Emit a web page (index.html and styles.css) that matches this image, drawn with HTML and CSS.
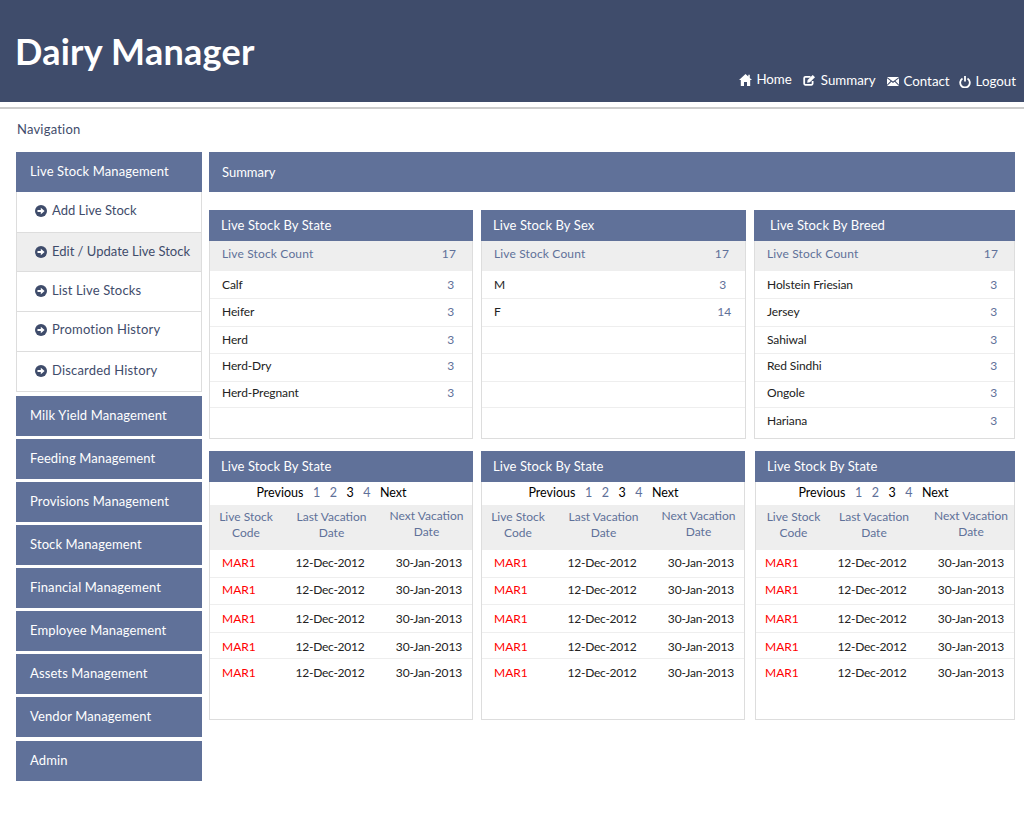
FILE: index.html
```html
<!DOCTYPE html>
<html>
<head>
  <meta charset="UTF-8">
  <title>Dairy Manager</title>
  <link rel="stylesheet" href="styles.css">
</head>
<body>
  <svg class="defs" width="0" height="0">
    <symbol id="i-arrow" viewBox="0 0 12 12">
      <circle cx="6" cy="6" r="6" fill="#3f4c6b"/>
      <path d="M2.500 4.900h3.300V2.800l3.800 3.200-3.800 3.200V7.100H2.500z" fill="#fff"/>
    </symbol>
  </svg>

  <div class="header">
    <div class="logo">Dairy Manager</div>
    <div class="topnav">
      <a class="topnav-item home">
        <svg width="13" height="12" viewBox="0 0 13 12"><path d="M6.500 0 0 5.900h1.800V12h3.200V8h3v4h3.200V5.900H13l-2.200-2V.8H9.300v1.700z" fill="#fff"/></svg>
        Home
      </a>
      <a class="topnav-item summary">
        <svg width="13" height="11" viewBox="0 0 13 11"><path d="M7.500 1.900H2.400a1.200 1.200 0 0 0-1.200 1.200v5.500a1.200 1.200 0 0 0 1.200 1.200h6a1.200 1.200 0 0 0 1.200-1.200V6" fill="none" stroke="#fff" stroke-width="1.800"/><path d="M4.600 5 9.700 0 12 2.200 6.900 7.200l-2.700.5z" fill="#fff"/></svg>
        Summary
      </a>
      <a class="topnav-item contact">
        <svg width="12" height="9" viewBox="0 0 12 9"><path d="M0 0h12L6 4.600z M0 1.200V7.800L3.600 4z M12 1.200V7.800L8.400 4z M0 9h12L7.600 4.800 6 6 4.400 4.800z" fill="#fff"/></svg>
        Contact
      </a>
      <a class="topnav-item logout">
        <svg width="12" height="12" viewBox="0 0 12 12"><path d="M3.500 2.600a4.800 4.800 0 1 0 5 0" fill="none" stroke="#fff" stroke-width="1.800"/><path d="M6 0v5.500" stroke="#fff" stroke-width="1.800"/></svg>
        Logout
      </a>
    </div>
  </div>
  <div class="header-rule"></div>

  <div class="nav-title">Navigation</div>

  <div class="layout">
    <div class="sidebar">
      <div class="side-head">Live Stock Management</div>
      <ul class="side-sub">
        <li><svg width="12" height="12"><use href="#i-arrow"/></svg>Add Live Stock</li>
        <li class="active"><svg width="12" height="12"><use href="#i-arrow"/></svg>Edit / Update Live Stock</li>
        <li><svg width="12" height="12"><use href="#i-arrow"/></svg>List Live Stocks</li>
        <li><svg width="12" height="12"><use href="#i-arrow"/></svg>Promotion History</li>
        <li><svg width="12" height="12"><use href="#i-arrow"/></svg>Discarded History</li>
      </ul>
      <div class="side-group">
        <div class="side-head">Milk Yield Management</div>
        <div class="side-head">Feeding Management</div>
        <div class="side-head">Provisions Management</div>
        <div class="side-head">Stock Management</div>
        <div class="side-head">Financial Management</div>
        <div class="side-head">Employee Management</div>
        <div class="side-head">Assets Management</div>
        <div class="side-head">Vendor Management</div>
        <div class="side-head admin">Admin</div>
      </div>
    </div>

    <div class="main">
      <div class="summary-bar">Summary</div>

      <div class="panels top">
        <div class="panel by-state">
          <div class="panel-head">Live Stock By State</div>
          <div class="count-row"><span>Live Stock Count</span><span class="num">17</span></div>
          <div class="row"><span>Calf</span><span class="num">3</span></div>
          <div class="row"><span>Heifer</span><span class="num">3</span></div>
          <div class="row"><span>Herd</span><span class="num">3</span></div>
          <div class="row"><span>Herd-Dry</span><span class="num">3</span></div>
          <div class="row"><span>Herd-Pregnant</span><span class="num">3</span></div>
        </div>
        <div class="panel by-sex">
          <div class="panel-head">Live Stock By Sex</div>
          <div class="count-row"><span>Live Stock Count</span><span class="num">17</span></div>
          <div class="row"><span>M</span><span class="num single">3</span></div>
          <div class="row"><span>F</span><span class="num">14</span></div>
          <div class="row"></div>
          <div class="row"></div>
          <div class="row"></div>
        </div>
        <div class="panel by-breed">
          <div class="panel-head">Live Stock By Breed</div>
          <div class="count-row"><span>Live Stock Count</span><span class="num">17</span></div>
          <div class="row"><span>Holstein Friesian</span><span class="num">3</span></div>
          <div class="row"><span>Jersey</span><span class="num">3</span></div>
          <div class="row"><span>Sahiwal</span><span class="num">3</span></div>
          <div class="row"><span>Red Sindhi</span><span class="num">3</span></div>
          <div class="row"><span>Ongole</span><span class="num">3</span></div>
          <div class="row"><span>Hariana</span><span class="num">3</span></div>
        </div>
      </div>

      <div class="panels bottom">
        <div class="panel">
          <div class="panel-head">Live Stock By State</div>
          <div class="pager"><span>Previous</span><a>1</a><a>2</a><span>3</span><a>4</a><span>Next</span></div>
          <div class="vac-head"><span>Live Stock<br>Code</span><span>Last Vacation<br>Date</span><span>Next Vacation<br>Date</span></div>
          <div class="vac-row"><span class="code">MAR1</span><span>12-Dec-2012</span><span>30-Jan-2013</span></div>
          <div class="vac-row"><span class="code">MAR1</span><span>12-Dec-2012</span><span>30-Jan-2013</span></div>
          <div class="vac-row"><span class="code">MAR1</span><span>12-Dec-2012</span><span>30-Jan-2013</span></div>
          <div class="vac-row"><span class="code">MAR1</span><span>12-Dec-2012</span><span>30-Jan-2013</span></div>
          <div class="vac-row"><span class="code">MAR1</span><span>12-Dec-2012</span><span>30-Jan-2013</span></div>
        </div>
        <div class="panel">
          <div class="panel-head">Live Stock By State</div>
          <div class="pager"><span>Previous</span><a>1</a><a>2</a><span>3</span><a>4</a><span>Next</span></div>
          <div class="vac-head"><span>Live Stock<br>Code</span><span>Last Vacation<br>Date</span><span>Next Vacation<br>Date</span></div>
          <div class="vac-row"><span class="code">MAR1</span><span>12-Dec-2012</span><span>30-Jan-2013</span></div>
          <div class="vac-row"><span class="code">MAR1</span><span>12-Dec-2012</span><span>30-Jan-2013</span></div>
          <div class="vac-row"><span class="code">MAR1</span><span>12-Dec-2012</span><span>30-Jan-2013</span></div>
          <div class="vac-row"><span class="code">MAR1</span><span>12-Dec-2012</span><span>30-Jan-2013</span></div>
          <div class="vac-row"><span class="code">MAR1</span><span>12-Dec-2012</span><span>30-Jan-2013</span></div>
        </div>
        <div class="panel third">
          <div class="panel-head">Live Stock By State</div>
          <div class="pager"><span>Previous</span><a>1</a><a>2</a><span>3</span><a>4</a><span>Next</span></div>
          <div class="vac-head"><span>Live Stock<br>Code</span><span>Last Vacation<br>Date</span><span>Next Vacation<br>Date</span></div>
          <div class="vac-row"><span class="code">MAR1</span><span>12-Dec-2012</span><span>30-Jan-2013</span></div>
          <div class="vac-row"><span class="code">MAR1</span><span>12-Dec-2012</span><span>30-Jan-2013</span></div>
          <div class="vac-row"><span class="code">MAR1</span><span>12-Dec-2012</span><span>30-Jan-2013</span></div>
          <div class="vac-row"><span class="code">MAR1</span><span>12-Dec-2012</span><span>30-Jan-2013</span></div>
          <div class="vac-row"><span class="code">MAR1</span><span>12-Dec-2012</span><span>30-Jan-2013</span></div>
        </div>
      </div>
    </div>
  </div>
</body>
</html>
```

FILE: styles.css
```css
body, html {
  margin: 0;
  padding: 0;
  background-color: #fff;
  font-family: Lato, "Open Sans", sans-serif;
  font-size: 13px;
}

.defs {
  display: block;
  height: 0;
}

/* header */
.header {
  background-color: #3f4c6b;
  height: 102px;
  display: flex;
  justify-content: space-between;
  box-sizing: border-box;
  padding: 29px 8px 0 15px;
}

.logo {
  color: #fff;
  font-size: 36px;
  font-weight: 700;
  line-height: 44px;
  letter-spacing: 0.25px;
}

.topnav {
  display: flex;
  align-items: flex-end;
  padding-bottom: 12px;
  color: #fff;
  font-size: 13.3px;
  line-height: 17px;
}

.topnav-item {
  display: flex;
  align-items: center;
  gap: 5px;
}

.topnav-item.home {
  gap: 4px;
  margin-bottom: 2px;
}

.topnav-item.summary {
  margin-bottom: 1px;
  margin-left: 11px;
}

.topnav-item.contact {
  margin-left: 11px;
}

.topnav-item.logout {
  margin-left: 9px;
}

.header-rule {
  height: 2px;
  margin-top: 5px;
  background-color: #ccc;
}

.nav-title {
  color: #3f4c6b;
  font-size: 13px;
  line-height: 16px;
  letter-spacing: 0.2px;
  padding: 12px 0 0 17px;
}

.layout {
  display: flex;
  gap: 7px;
  padding: 15px 9px 0 16px;
}

/* sidebar */
.sidebar {
  width: 186px;
  flex-shrink: 0;
}

.side-head {
  background-color: #607199;
  color: #fff;
  height: 40px;
  line-height: 38px;
  padding-left: 14px;
  font-size: 13px;
  letter-spacing: 0.12px;
}

.side-sub {
  list-style: none;
  margin: 0;
  padding: 0;
  border: 1px solid #ddd;
  border-top: 0;
}

.side-sub li {
  display: flex;
  align-items: flex-start;
  gap: 5px;
  box-sizing: border-box;
  height: 40px;
  line-height: 36px;
  padding-left: 18px;
  color: #3f4c6b;
  font-size: 13px;
  border-bottom: 1px solid #ddd;
}

.side-sub li svg {
  margin-top: 13px;
}

.side-sub li:nth-child(1) {
  height: 41px;
}

.side-sub li:nth-child(2) {
  height: 39px;
}

.side-sub li:nth-child(3) {
  letter-spacing: 0.13px;
}

.side-sub li:nth-child(4) {
  line-height: 34px;
  letter-spacing: 0.18px;
}

.side-sub li:nth-child(4) svg {
  margin-top: 12px;
}

.side-sub li:last-child {
  height: 39px;
  letter-spacing: 0.18px;
  border-bottom: 0;
}

.side-sub li.active {
  background-color: #eee;
}

.side-group {
  display: flex;
  flex-direction: column;
  gap: 3px;
  margin-top: 4px;
}

.side-head.admin {
  margin-top: 1px;
}

/* main column */
.main {
  flex-grow: 1;
  min-width: 0;
}

.summary-bar {
  background-color: #607199;
  color: #fff;
  height: 40px;
  line-height: 40px;
  padding-left: 13px;
  font-size: 13px;
}

.panels {
  display: grid;
  column-gap: 8px;
}

.panels.top {
  grid-template-columns: 264px 265px 261px;
  margin-top: 18px;
  height: 229px;
}

.panels.bottom {
  grid-template-columns: 264px 264px 1fr;
  margin-top: 12px;
  height: 269px;
}

.panel {
  border: 1px solid #ddd;
  border-top: 0;
  min-width: 0;
}

.panel.third {
  margin-left: 2px;
}

.panel-head {
  background-color: #607199;
  color: #fff;
  height: 31px;
  line-height: 30px;
  margin: 0 -1px;
  padding-left: 12px;
  font-size: 13px;
  letter-spacing: 0.1px;
}

.by-breed .panel-head {
  padding-left: 16px;
}

.count-row {
  display: flex;
  justify-content: space-between;
  background-color: #eee;
  color: #5f7199;
  height: 30px;
  line-height: 26px;
  padding: 0 16px 0 12px;
  font-size: 12px;
  letter-spacing: 0.15px;
}

/* rows in the top panels */
.row {
  display: flex;
  justify-content: space-between;
  box-sizing: border-box;
  height: 28px;
  padding: 0 18px 0 12px;
  color: #222;
  font-size: 12px;
  letter-spacing: -0.1px;
  border-bottom: 1px solid #eee;
}

.row:nth-child(3) {
  line-height: 27px;
}

.row:nth-child(4), .row:nth-child(5) {
  line-height: 25px;
}

.row:nth-child(5) {
  height: 27px;
}

.row:nth-child(6) {
  line-height: 23px;
}

.row:nth-child(7) {
  height: 26px;
  line-height: 21px;
}

.row:nth-child(8) {
  height: 30px;
  line-height: 26px;
  border-bottom: 0;
}

.by-sex .row {
  padding-right: 14px;
}

.by-breed .row {
  padding-right: 17px;
}

.num {
  color: #5f7199;
}

.num.single {
  margin-right: 5px;
}

/* lower panels */
.pager {
  display: flex;
  justify-content: center;
  gap: 9.500px;
  height: 23px;
  line-height: 21px;
  padding-right: 19px;
  color: #000;
  font-size: 12.500px;
}

.third .pager {
  padding-right: 23px;
}

.pager a {
  color: #5f7199;
}

.vac-head, .vac-row {
  display: grid;
  grid-template-columns: 72px 99px 1fr;
  font-size: 12px;
  text-align: center;
}

.third .vac-head, .third .vac-row {
  grid-template-columns: 75px 86px 1fr;
}

.vac-head {
  background-color: #eee;
  height: 45px;
  padding-top: 4px;
  box-sizing: border-box;
  color: #5f7199;
  line-height: 16px;
}

.vac-head span:nth-child(3) {
  margin-top: -1px;
}

.third .vac-head span:nth-child(3) {
  padding-left: 11px;
}

.vac-row {
  box-sizing: border-box;
  height: 28px;
  color: #222;
  border-bottom: 1px solid #eee;
}

.vac-row span:nth-child(2) {
  padding-right: 3px;
  letter-spacing: -0.25px;
}

.vac-row span:nth-child(3) {
  padding-left: 5px;
  letter-spacing: -0.1px;
}

.third .vac-row span:nth-child(2) {
  padding-right: 4px;
}

.third .vac-row span:nth-child(3) {
  padding-left: 11px;
}

.vac-row:nth-child(4) {
  line-height: 26px;
}

.vac-row:nth-child(5) {
  height: 27px;
  line-height: 24px;
}

.vac-row:nth-child(6) {
  line-height: 28px;
}

.vac-row:nth-child(7) {
  height: 26px;
  line-height: 28px;
}

.vac-row:nth-child(8) {
  line-height: 28px;
  border-bottom: 0;
}

.code {
  color: #f00;
  text-align: left;
  padding-left: 12px;
}

.third .code {
  padding-left: 9px;
}
```
